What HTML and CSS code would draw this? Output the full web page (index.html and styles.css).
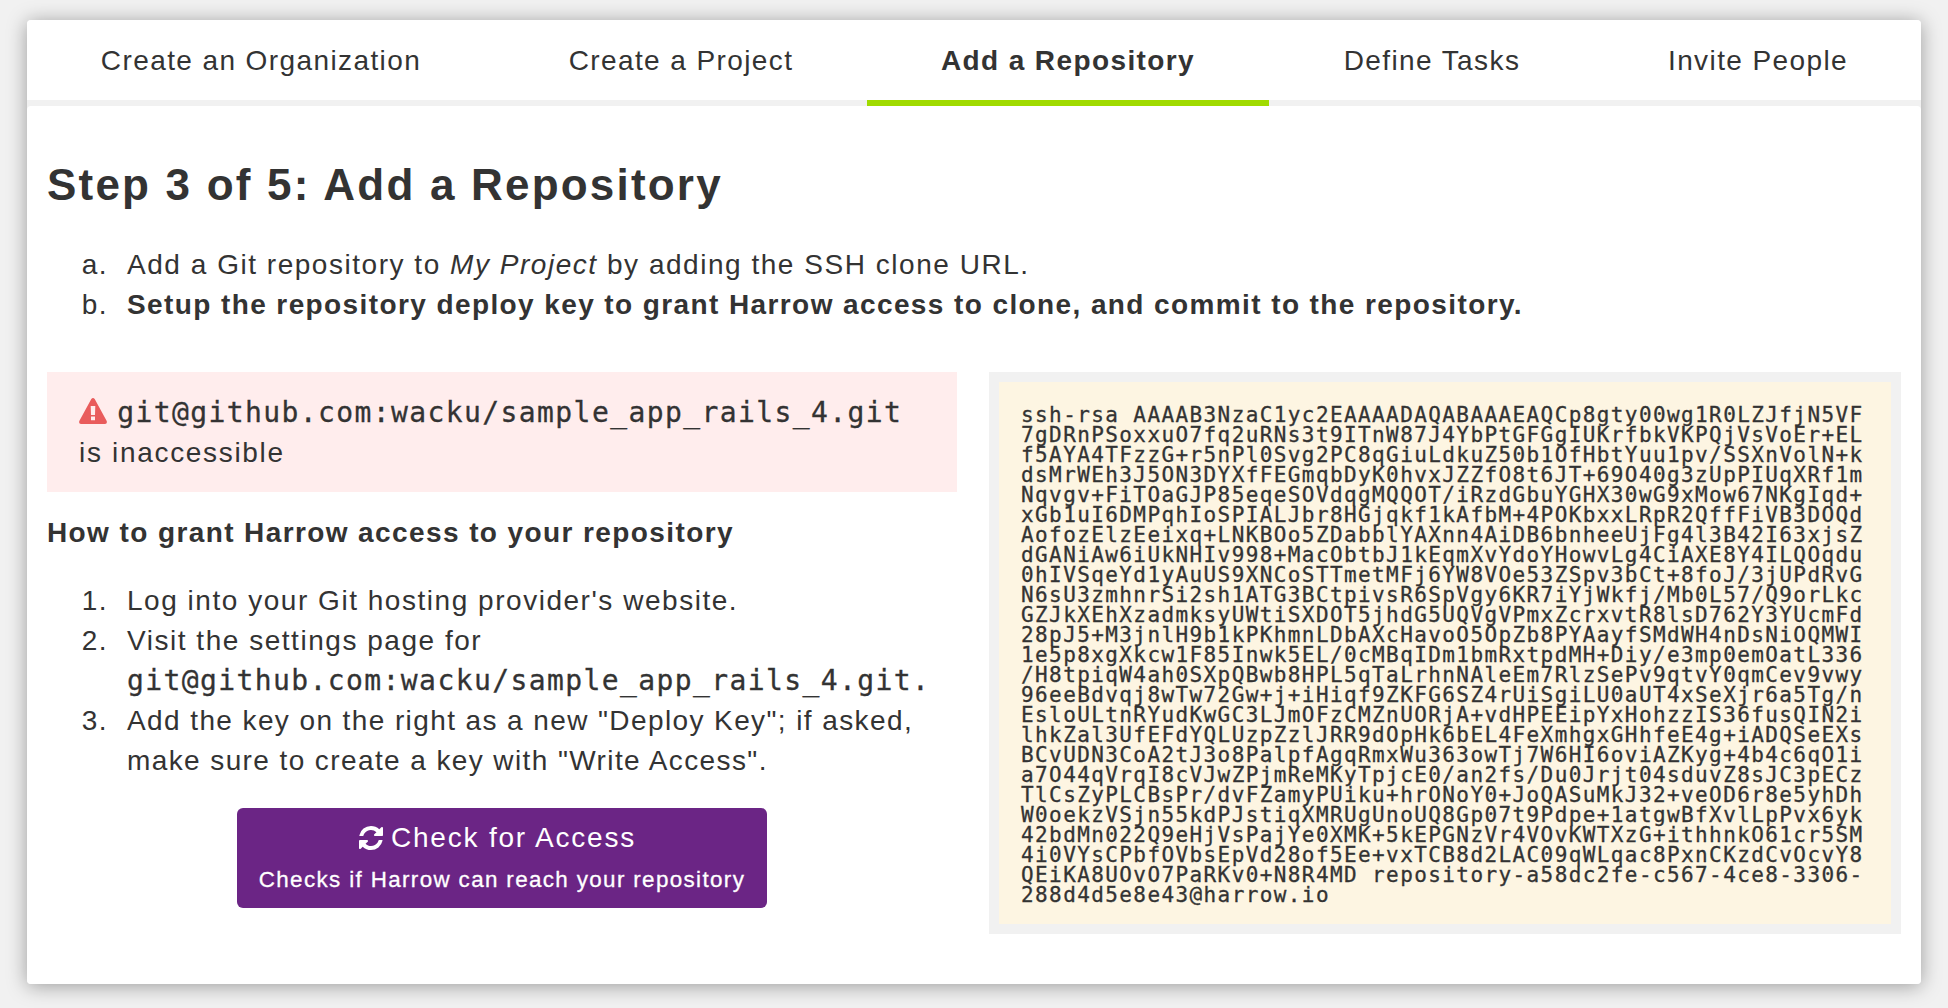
FILE: index.html
```html
<!DOCTYPE html>
<html lang="en">
<head>
<meta charset="utf-8">
<title>Add a Repository</title>
<link rel="stylesheet" href="styles.css">
</head>
<body>
<main class="card">
  <nav class="steps">
    <a class="step">Create an Organization</a>
    <a class="step">Create a Project</a>
    <a class="step step-active">Add a Repository</a>
    <a class="step">Define Tasks</a>
    <a class="step">Invite People</a>
  </nav>
  <section class="content">
    <h1 class="title">Step 3 of 5: Add a Repository</h1>
    <ol class="list list-alpha">
      <li><span class="wide">Add a Git repository to <em>My Project</em> by adding the SSH clone URL.</span></li>
      <li><strong>Setup the repository deploy key to grant Harrow access to clone, and commit to the repository.</strong></li>
    </ol>
    <div class="columns">
      <div class="column">
        <div class="alert">
          <svg class="icon-warning" viewBox="0 0 28 26" aria-hidden="true"><path fill-rule="evenodd" d="M12.3 1Q14 -1 15.700 1L27.700 23Q28.500 26 26 26H2Q-.5 26 .3 23ZM11.700 8L12 17H16L16.300 8ZM12 18.500V22.300H16V18.500Z"/></svg>
          <code>git@github.com:wacku/sample_app_rails_4.git</code><br><span class="wider">is inaccessible</span>
        </div>
        <h2 class="subtitle">How to grant Harrow access to your repository</h2>
        <ol class="list list-steps">
          <li><span class="wide">Log into your Git hosting provider's website.</span></li>
          <li><span class="wide">Visit the settings page for</span><br><code>git@github.com:wacku/sample_app_rails_4.git.</code></li>
          <li>Add the key on the right as a new "Deploy Key"; if asked,<br>make sure to create a key with "Write Access".</li>
        </ol>
        <button class="button" type="button">
          <span class="button-label"><svg class="icon-refresh" viewBox="0 0 1536 1536" aria-hidden="true"><path d="M1511 928q0 5-1 7-64 268-268 434.500T764 1536q-146 0-282.500-55T238 1324l-129 129q-19 19-45 19t-45-19-19-45V960q0-26 19-45t45-19h448q26 0 45 19t19 45-19 45l-137 137q71 66 161 102t187 36q134 0 250-65t186-179q11-17 53-117 8-23 30-23h192q13 0 22.500 9.500t9.500 22.500zm25-800v448q0 26-19 45t-45 19h-448q-26 0-45-19t-19-45 19-45l138-138Q969 256 768 256q-134 0-250 65T332 500q-11 17-53 117-8 23-30 23H50q-13 0-22.500-9.500T18 608v-7q65-268 270-434.500T768 0q146 0 284 55.500T1297 212l130-129q19-19 45-19t45 19 19 45z"/></svg>Check for Access</span>
          <span class="button-note">Checks if Harrow can reach your repository</span>
        </button>
      </div>
      <pre class="key">ssh-rsa AAAAB3NzaC1yc2EAAAADAQABAAAEAQCp8gty00wg1R0LZJfjN5VF
7gDRnPSoxxuO7fq2uRNs3t9ITnW87J4YbPtGFGgIUKrfbkVKPQjVsVoEr+EL
f5AYA4TFzzG+r5nPl0Svg2PC8qGiuLdkuZ50b1OfHbtYuu1pv/SSXnVolN+k
dsMrWEh3J5ON3DYXfFEGmqbDyK0hvxJZZfO8t6JT+69O40g3zUpPIUqXRf1m
Nqvgv+FiTOaGJP85eqeSOVdqgMQQOT/iRzdGbuYGHX30wG9xMow67NKgIqd+
xGb1uI6DMPqhIoSPIALJbr8HGjqkf1kAfbM+4POKbxxLRpR2QffFiVB3DOQd
AofozElzEeixq+LNKBOo5ZDabblYAXnn4AiDB6bnheeUjFg4l3B42I63xjsZ
dGANiAw6iUkNHIv998+MacObtbJ1kEqmXvYdoYHowvLg4CiAXE8Y4ILQOqdu
0hIVSqeYd1yAuUS9XNCoSTTmetMFj6YW8VOe53ZSpv3bCt+8foJ/3jUPdRvG
N6sU3zmhnrSi2sh1ATG3BCtpivsR6SpVgy6KR7iYjWkfj/Mb0L57/Q9orLkc
GZJkXEhXzadmksyUWtiSXDOT5jhdG5UQVgVPmxZcrxvtR8lsD762Y3YUcmFd
28pJ5+M3jnlH9b1kPKhmnLDbAXcHavoO5OpZb8PYAayfSMdWH4nDsNiOQMWI
1e5p8xgXkcw1F85Inwk5EL/0cMBqIDm1bmRxtpdMH+Diy/e3mp0emOatL336
/H8tpiqW4ah0SXpQBwb8HPL5qTaLrhnNAleEm7RlzSePv9qtvY0qmCev9vwy
96eeBdvqj8wTw72Gw+j+iHiqf9ZKFG6SZ4rUiSgiLU0aUT4xSeXjr6a5Tg/n
EsloULtnRYudKwGC3LJmOFzCMZnUORjA+vdHPEEipYxHohzzIS36fusQIN2i
lhkZal3UfEFdYQLUzpZzlJRR9dOpHk6bEL4FeXmhgxGHhfeE4g+iADQSeEXs
BCvUDN3CoA2tJ3o8PalpfAgqRmxWu363owTj7W6HI6oviAZKyg+4b4c6qO1i
a7O44qVrqI8cVJwZPjmReMKyTpjcE0/an2fs/Du0Jrjt04sduvZ8sJC3pECz
TlCsZyPLCBsPr/dvFZamyPUiku+hrONoY0+JoQASuMkJ32+veOD6r8e5yhDh
W0oekzVSjn55kdPJstiqXMRUgUnoUQ8Gp07t9Pdpe+1atgwBfXvlLpPvx6yk
42bdMn022Q9eHjVsPajYe0XMK+5kEPGNzVr4VOvKWTXzG+ithhnkO61cr5SM
4i0VYsCPbfOVbsEpVd28of5Ee+vxTCB8d2LAC09qWLqac8PxnCKzdCvOcvY8
QEiKA8UOvO7PaRKv0+N8R4MD repository-a58dc2fe-c567-4ce8-3306-
288d4d5e8e43@harrow.io</pre>
    </div>
  </section>
</main>
</body>
</html>
```
FILE: styles.css
```css
* {
  box-sizing: border-box;
}

body {
  margin: 0;
  padding: 20px 27px 24px;
  background: #f1f1f1;
  color: #333;
  font: 28px/40px "Liberation Sans", Arial, sans-serif;
  letter-spacing: 1.4px;
}

code,
.key {
  font-family: "DejaVu Sans Mono", monospace;
  -webkit-text-stroke: 0.3px #333;
}

code {
  font-size: 28px;
  line-height: 1;
}

.card {
  height: 964px;
  background: #f1f1f1;
  border-radius: 4px;
  box-shadow: 0 2px 20px rgba(0, 0, 0, 0.36);
}

.steps {
  display: grid;
  grid-template-columns: 468fr 372fr 402fr 326fr 326fr;
  height: 86px;
  background: #fff;
  border-radius: 4px 4px 0 0;
}

.step {
  padding-top: 21px;
  border-bottom: 6px solid #f1f1f1;
  text-align: center;
  white-space: nowrap;
}

.step-active {
  border-color: #a0db00;
  font-weight: bold;
}

.content {
  height: 878px;
  padding: 49px 20px 0;
  background: #fff;
  border-radius: 4px;
}

.title {
  margin: 0 0 30px;
  font-size: 44px;
  line-height: 60px;
  letter-spacing: 2.2px;
}

.list {
  margin: 0;
  padding-left: 70px;
}

.list li {
  padding-left: 10px;
}

.list-alpha {
  margin-bottom: 47px;
  list-style: lower-alpha;
}

.list-steps {
  margin-bottom: 27px;
}

.wide {
  letter-spacing: 1.53px;
}

.wider {
  letter-spacing: 1.68px;
}

.columns {
  display: grid;
  grid-template-columns: 910px 912px;
  gap: 32px;
}

.alert {
  height: 120px;
  margin-bottom: 21px;
  padding: 21px 32px 0;
  background: #ffeded;
}

.icon-warning {
  width: 28px;
  height: 26px;
  margin-right: 1px;
  vertical-align: -2px;
  fill: #e95c5c;
}

.subtitle {
  margin: 0 0 28px;
  font-size: 28px;
  line-height: 40px;
}

.button {
  display: block;
  width: 530px;
  height: 100px;
  margin: 0 auto;
  padding: 10px 0;
  border: 0;
  border-radius: 6px;
  background: #6b2585;
  color: #fff;
  font: inherit;
  letter-spacing: inherit;
}

.button-label {
  display: flex;
  align-items: center;
  justify-content: center;
  height: 40px;
  padding-right: 9px;
  letter-spacing: 1.8px;
}

.button-note {
  display: block;
  padding-top: 2px;
  font-size: 22.4px;
  letter-spacing: 1.36px;
  -webkit-text-stroke: 0.3px #fff;
}

.icon-refresh {
  width: 24px;
  height: 24px;
  margin-right: 8px;
  fill: #fff;
}

.key {
  height: 562px;
  margin: 0;
  padding: 23px 0 0 22px;
  border: 10px solid #f1f1f1;
  background: #fdf5e2;
  font-size: 21px;
  line-height: 20px;
}
```
